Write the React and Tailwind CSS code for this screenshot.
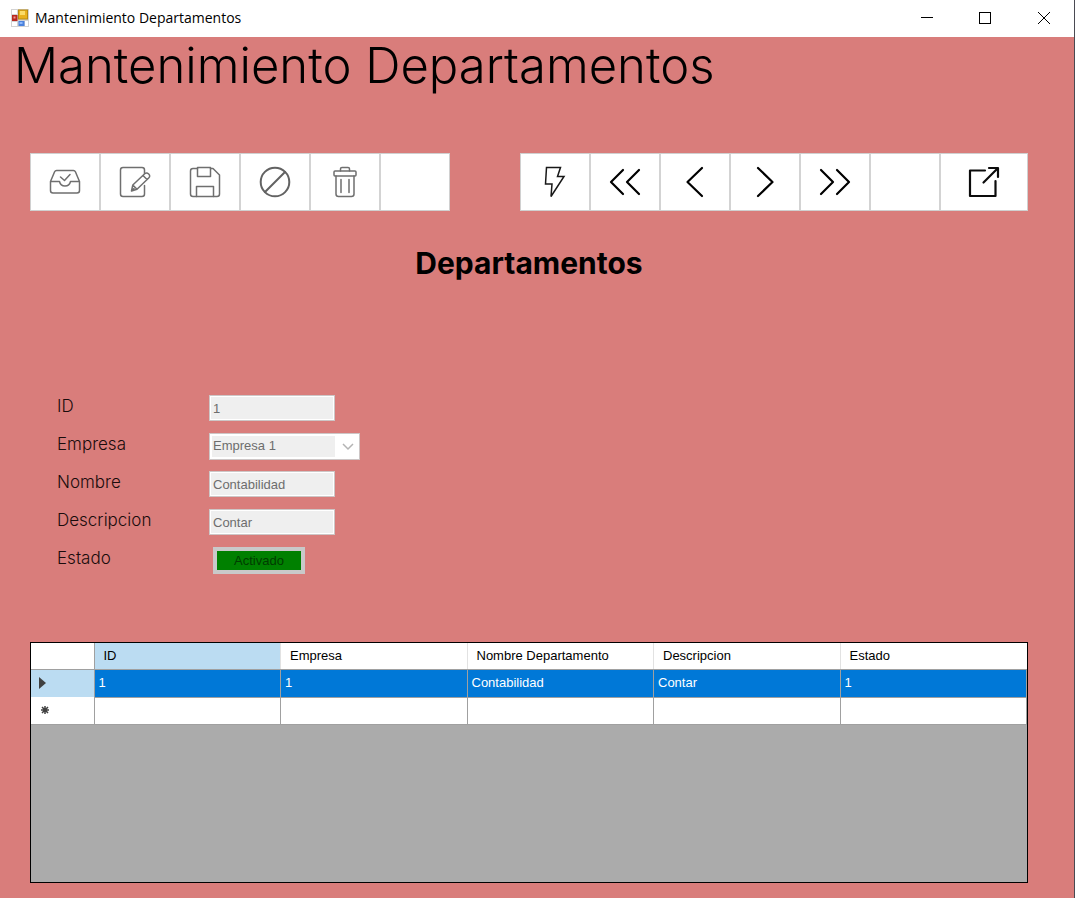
import React from "react";

const gothic = "font-['Century_Gothic','Inter',sans-serif]";
const fieldClass =
  "h-[26px] w-[126px] border border-[#cdc6c6] bg-[#efefef] px-[3px] text-[13px] leading-5 text-[#6d6d6d] shadow-[inset_0_0_0_1px_#ffffff]";

function Icon({ children, className = "text-[#6f6f6f]", width = 1.5 }) {
  return (
    <svg
      viewBox="0 0 32 32"
      className={`size-8 ${className}`}
      fill="none"
      stroke="currentColor"
      strokeWidth={width}
      strokeLinecap="round"
      strokeLinejoin="round"
      aria-hidden="true"
    >
      {children}
    </svg>
  );
}

const editTools = [
  {
    name: "Ingresar",
    icon: (
      <Icon>
        <path d="M1.5 15.5 5.6 5.8Q6.2 4.500 7.600 4.500H24.400Q25.800 4.500 26.400 5.800L30.500 15.500V24.500Q30.500 27 28 27H4Q1.500 27 1.500 24.500ZM1.500 15.500H10.500Q11.500 20 16 20T21.500 15.500H30.500" />
        <path d="m11.500 11 4 3.500 5.500-6" />
      </Icon>
    ),
  },
  {
    name: "Modificar",
    icon: (
      <Icon>
        <path d="M25.500 19.500V28Q25.500 30.500 23 30.500H4Q1.500 30.500 1.500 28V4Q1.500 1.500 4 1.500H23Q25.500 1.500 25.500 4V7.500" />
        <path d="m12.500 25 1.300-6L25.700 7.700Q27.700 6 29.700 8T29.700 12L18 23.300ZM13.800 19 18 23.300M24 9.500 28 13.500M12.500 25l2.500-2.500" />
      </Icon>
    ),
  },
  {
    name: "Guardar",
    icon: (
      <Icon>
        <path d="M4 2.500H8.500V1.500H21.500V2.500H24L30.500 9V28Q30.500 30.500 28 30.500H4Q1.500 30.500 1.500 28V5Q1.500 2.500 4 2.500Z" />
        <path d="M8.500 2.500V10.500H21.500V2.500M7.500 30.500V20.500H24.500V30.500" />
      </Icon>
    ),
  },
  {
    name: "Cancelar",
    icon: (
      <Icon width={2} className="text-[#626262]">
        <circle cx="16" cy="16" r="14.300" />
        <path d="M6 26 26 6" />
      </Icon>
    ),
  },
  {
    name: "Eliminar",
    icon: (
      <Icon>
        <rect x="5" y="5" width="22" height="5" rx="1" />
        <path d="M11.500 5V2.800Q11.500 1.500 13 1.500H19Q20.500 1.500 20.500 2.800V5" />
        <path d="M7 10V28Q7 30.500 9.500 30.500H22.500Q25 30.500 25 28V10M12 13.500V26.500M20 13.500V26.500" />
      </Icon>
    ),
  },
  { name: "Consultar", icon: null },
];

const navTools = [
  {
    name: "Actualizar",
    icon: (
      <Icon className="text-[#181818]">
        <path d="M7.500 1.500H21.500L18.500 10.500H25L12 30.500 13 18H6.500Z" strokeLinejoin="miter" />
      </Icon>
    ),
  },
  {
    name: "Inicio",
    icon: (
      <Icon className="text-black" width={2.2}>
        <path d="M14 4 2 16 14 28M30 4 18 16 30 28" />
      </Icon>
    ),
  },
  {
    name: "Anterior",
    icon: (
      <Icon className="text-black" width={2.2}>
        <path d="M23 2 8.500 16 23 30" />
      </Icon>
    ),
  },
  {
    name: "Siguiente",
    icon: (
      <Icon className="text-black" width={2.2}>
        <path d="M9 2 23.500 16 9 30" />
      </Icon>
    ),
  },
  {
    name: "Fin",
    icon: (
      <Icon className="text-black" width={2.2}>
        <path d="M2 4 14 16 2 28M18 4 30 16 18 28" />
      </Icon>
    ),
  },
  { name: "Ayuda", icon: null },
  {
    name: "Salir",
    wide: true,
    icon: (
      <Icon className="text-[#0c0c0c]" width={2.2}>
        <path d="M17 4.500H2V30H27.500V15M15.500 16.500 29 3M21 2H30V11" />
      </Icon>
    ),
  },
];

function Toolbar({ label, tools }) {
  return (
    <div role="toolbar" aria-label={label} className="flex border border-[#d0d0d0]">
      {tools.map((tool, i) => (
        <button
          key={tool.name}
          type="button"
          aria-label={tool.name}
          className={`flex h-14 items-center justify-center bg-white ${tool.wide ? "w-[88px]" : i === 0 ? "w-[68px]" : "w-[70px]"} ${i > 0 ? "border-l-2 border-[#d3d3d3]" : ""}`}
        >
          {tool.icon}
        </button>
      ))}
    </div>
  );
}

function Field({ id, label, children }) {
  return (
    <div className="flex h-[38px] items-center">
      <label htmlFor={id} className={`w-[152px] pb-1 text-[17px] leading-5 font-light text-[#1a0c0c] ${gothic}`}>
        {label}
      </label>
      {children}
    </div>
  );
}

const columns = ["ID", "Empresa", "Nombre Departamento", "Descripcion", "Estado"];
const record = ["1", "1", "Contabilidad", "Contar", "1"];

export default function App() {
  return (
    <div className="flex min-h-screen flex-col border-r border-[#4a4a52] bg-[#d97d7b] font-['Microsoft_Sans_Serif','Liberation_Sans',sans-serif] text-black">
      <header className="flex h-[37px] items-center bg-white pb-0.5 pl-[11px]">
        <svg viewBox="0 0 18 18" className="size-[18px]" aria-hidden="true">
          <rect width="18" height="18" fill="#d3d3d3" />
          <rect x="1" y="1" width="5" height="4" fill="#fff" />
          <rect x="1" y="13" width="5" height="4" fill="#fff" />
          <rect x="14" y="12" width="3" height="5" fill="#fff" />
          <rect x="7.500" y="1" width="9" height="9" fill="#e9b11c" stroke="#b88a10" />
          <rect x="9" y="2" width="5" height="4" fill="#fbdc68" />
          <rect x="1" y="6" width="5.500" height="6" fill="#b92820" />
          <rect x="2.500" y="7.500" width="2" height="2" fill="#ee9990" />
          <rect x="7.500" y="12" width="6" height="5" fill="#4b82de" />
          <rect x="8.500" y="13" width="3" height="2" fill="#8fb8fa" />
        </svg>
        <span className="ml-1.5 flex-1 font-['Segoe_UI','Open_Sans',sans-serif] text-[14px]">Mantenimiento Departamentos</span>
        <div className="flex h-full">
          <button type="button" aria-label="Minimizar" className="flex w-[58px] items-center justify-center">
            <svg viewBox="0 0 12 12" className="size-3" stroke="#000" aria-hidden="true"><path d="M0 5.500H12" /></svg>
          </button>
          <button type="button" aria-label="Maximizar" className="flex w-[58px] items-center justify-center">
            <svg viewBox="0 0 12 12" className="size-3" fill="none" stroke="#000" aria-hidden="true"><rect x="0.500" y="0.500" width="11" height="11" /></svg>
          </button>
          <button type="button" aria-label="Cerrar" className="flex w-[60px] items-center justify-center">
            <svg viewBox="0 0 12 12" className="size-3" stroke="#000" aria-hidden="true"><path d="M0 0 12 12M12 0 0 12" /></svg>
          </button>
        </div>
      </header>

      <main className="flex flex-1 flex-col pr-[46px] pb-[15px] pl-[30px]">
        <h1 className={`-ml-4 h-[116px] text-[49px] leading-[58px] font-light whitespace-nowrap ${gothic}`}>Mantenimiento Departamentos</h1>

        <div className="flex justify-between">
          <Toolbar label="Edición" tools={editTools} />
          <Toolbar label="Navegación" tools={navTools} />
        </div>

        <h2 className={`mt-8 text-center text-[30px] leading-10 font-bold ${gothic}`}>Departamentos</h2>

        <form className="mt-[106px] ml-[27px]">
          <Field id="id" label="ID">
            <input id="id" className={fieldClass} defaultValue="1" disabled />
          </Field>
          <Field id="empresa" label="Empresa">
            <div className="flex h-[27px] w-[151px] items-center border border-[#cdc6c6] bg-white p-0.5">
              <select id="empresa" disabled className="h-full min-w-0 flex-1 appearance-none bg-[#efefef] px-px text-[13px] text-[#6d6d6d] opacity-100">
                <option>Empresa 1</option>
              </select>
              <svg viewBox="0 0 22 12" className="h-3 w-[22px]" fill="none" stroke="#b4b4b4" strokeWidth="1.500" aria-hidden="true"><path d="m8 4 5 5 5-5" /></svg>
            </div>
          </Field>
          <Field id="nombre" label="Nombre">
            <input id="nombre" className={fieldClass} defaultValue="Contabilidad" disabled />
          </Field>
          <Field id="descripcion" label="Descripcion">
            <input id="descripcion" className={fieldClass} defaultValue="Contar" disabled />
          </Field>
          <Field id="estado" label="Estado">
            <button id="estado" type="button" disabled className="ml-1 h-[27px] w-[92px] border-4 border-[#c9c9c9] bg-[#008000] text-[13px] leading-5 text-[#003c00]">
              Activado
            </button>
          </Field>
        </form>

        <section className="mt-[63px] flex-1 border border-black bg-[#ababab]">
          <table className="w-full table-fixed border-collapse bg-white text-left text-[13px] leading-5">
            <colgroup>
              <col className="w-[63px]" />
              {columns.map((c) => <col key={c} />)}
            </colgroup>
            <thead>
              <tr className="h-[26px]">
                <th className="border-r border-b border-[#a0a0a0]" aria-label="Selector" />
                {columns.map((c, i) => (
                  <th key={c} scope="col" className={`border-b border-b-[#a0a0a0] p-0 pl-[9px] font-normal ${i === 0 ? "bg-[#bbdcf2]" : "border-l border-l-[#e2e2e2]"}`}>
                    {c}
                  </th>
                ))}
              </tr>
            </thead>
            <tbody>
              <tr className="h-7 bg-[#0078d7] text-white">
                <th scope="row" aria-label="Fila actual" className="border-r border-[#a0a0a0] bg-[#bbdcf2] p-0 pl-2">
                  <svg viewBox="0 0 7 12" className="h-3 w-[7px]" fill="#404040" aria-hidden="true"><path d="M0 0 7 6 0 12Z" /></svg>
                </th>
                {record.map((value, i) => (
                  <td key={columns[i]} className="border-r border-b border-[#a0a0a0] p-0 pl-1">{value}</td>
                ))}
              </tr>
              <tr className="h-[27px]">
                <th scope="row" aria-label="Fila nueva" className="border-r border-b border-[#a0a0a0] p-0 pl-2.5">
                  <svg viewBox="0 0 8 8" className="size-2" stroke="#404040" strokeWidth="1.500" aria-hidden="true"><path d="M4 0V8M0 4H8M1 1 7 7M7 1 1 7" /></svg>
                </th>
                {columns.map((c) => <td key={c} className="border-r border-b border-[#a0a0a0]" />)}
              </tr>
            </tbody>
          </table>
        </section>
      </main>
    </div>
  );
}
